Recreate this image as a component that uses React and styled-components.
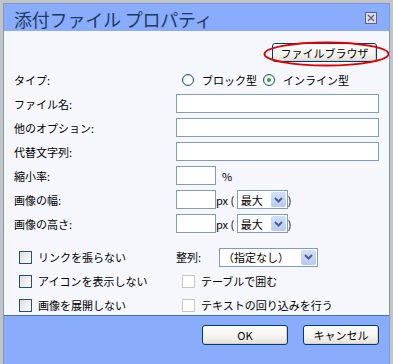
import React from "react";
import styled, { createGlobalStyle } from "styled-components";

const GlobalStyle = createGlobalStyle`
  html, body {
    margin: 0;
    padding: 0;
    background: #c4c4c4;
  }
  body {
    font-family: "Noto Sans CJK JP", "Liberation Sans", sans-serif;
    font-size: 11px;
    color: #000;
  }
`;

const Dialog = styled.div`
  margin: 3px 0 0 3px;
  width: 387px;
  height: 361px;
  box-sizing: border-box;
  border: 1px solid #7b98dc;
  border-bottom: none;
  background: #f5f7fd;
  display: flex;
  flex-direction: column;
  overflow: hidden;
`;

const Header = styled.div`
  height: 27px;
  flex: none;
  background: #8aacfc;
  display: flex;
  align-items: center;
  justify-content: space-between;
  padding: 0 12px 0 10px;
`;

const Title = styled.div`
  font-size: 18px;
  color: #1e3a5f;
  line-height: 1;
  letter-spacing: -0.2px;
  margin-top: 2px;
`;

const CloseBox = styled.div`
  width: 12px;
  height: 12px;
  display: flex;
`;

const Body = styled.div`
  flex: 1;
  padding: 12px 12px 0 10px;
  display: flex;
  flex-direction: column;
`;

const TopRow = styled.div`
  display: flex;
  justify-content: flex-end;
`;

const Anchor = styled.div`
  position: relative;
`;

const Ring = styled.svg`
  position: absolute;
  left: -9px;
  top: -2px;
  pointer-events: none;
`;

const XpButton = styled.button`
  box-sizing: border-box;
  width: ${(p) => p.$w}px;
  height: ${(p) => p.$h}px;
  padding: 0;
  font: inherit;
  color: #000;
  border: 1px solid #003c74;
  border-radius: 3px;
  background: linear-gradient(#ffffff, #f4f3ee 60%, #e3e0d6);
  box-shadow: inset -1px -1px 0 #d6d0c5;
  display: flex;
  align-items: center;
  justify-content: center;
`;

const Form = styled.div`
  margin-top: 8px;
  display: grid;
  grid-template-columns: 162px 1fr;
  grid-auto-rows: 19px;
  row-gap: 5px;
  align-items: center;
`;

const Label = styled.div`
  white-space: nowrap;
`;

const Field = styled.div`
  display: flex;
  align-items: center;
  height: 19px;
`;

const TextBox = styled.div`
  box-sizing: border-box;
  width: ${(p) => p.$w}px;
  height: 19px;
  border: 1px solid #7f9db9;
  background: #fff;
  flex: none;
`;

const Unit = styled.span`
  margin-left: ${(p) => p.$ml || 0}px;
  white-space: pre;
`;

const Radio = styled.span`
  box-sizing: border-box;
  width: 12px;
  height: 12px;
  border-radius: 50%;
  border: 1px solid #1c5180;
  background: radial-gradient(circle at 60% 60%, #ffffff 20%, #dcdcd7 90%);
  display: inline-flex;
  align-items: center;
  justify-content: center;
  margin: 0 8px 0 6px;
  flex: none;

  &::after {
    content: "";
    width: 4px;
    height: 4px;
    border-radius: 50%;
    background: ${(p) => (p.$on ? "#2da52d" : "transparent")};
  }
`;

const Options = styled.div`
  margin-top: 14px;
  padding-left: 5px;
  display: grid;
  grid-template-columns: 157px 1fr;
  grid-auto-rows: 20px;
  row-gap: 4px;
  align-items: center;
`;

const CheckRow = styled.div`
  display: flex;
  align-items: center;
  white-space: nowrap;
  padding-left: ${(p) => p.$pl || 0}px;
`;

const Check = styled.span`
  box-sizing: border-box;
  width: 13px;
  height: 13px;
  flex: none;
  margin-right: 6px;
  border: 1px solid ${(p) => (p.$off ? "#cac8bb" : "#1c5180")};
  background: ${(p) =>
    p.$off ? "#fff" : "linear-gradient(135deg, #dcdcd7, #ffffff)"};
`;

const AlignLabel = styled.span`
  width: 43px;
  flex: none;
`;

const Select = styled.div`
  box-sizing: border-box;
  width: ${(p) => p.$w}px;
  height: 19px;
  border: 1px solid #7f9db9;
  background: #fff;
  display: flex;
  align-items: center;
  justify-content: space-between;
  padding: 0 1px 0 3px;
  flex: none;
`;

const Arrow = styled.span`
  width: 15px;
  height: 15px;
  border-radius: 2px;
  background: linear-gradient(#d3defb, #b6c9f7);
  display: flex;
  align-items: center;
  justify-content: center;
`;

const Footer = styled.div`
  height: 39px;
  flex: none;
  border-top: 1px solid #4d71b6;
  background: #8aacfc;
  display: flex;
  justify-content: flex-end;
  gap: 15px;
  padding: 9px 10px 0 0;
  box-sizing: content-box;
`;

const Chevron = () => (
  <svg width="9" height="6" viewBox="0 0 9 6">
    <path d="M1 1 L4.5 4.5 L8 1" fill="none" stroke="#4d6185" strokeWidth="2" />
  </svg>
);

const Dropdown = ({ w, children }) => (
  <Select $w={w}>
    <span>{children}</span>
    <Arrow>
      <Chevron />
    </Arrow>
  </Select>
);

export default function App() {
  return (
    <>
      <GlobalStyle />
      <Dialog>
        <Header>
          <Title>添付ファイル プロパティ</Title>
          <CloseBox>
            <svg width="12" height="12" viewBox="0 0 12 12">
              <rect x="0.5" y="0.5" width="11" height="11" fill="#dcdcef" stroke="#5f5f7a" />
              <path d="M3 3 L9 9 M9 3 L3 9" stroke="#5f5f7a" strokeWidth="1.4" />
            </svg>
          </CloseBox>
        </Header>
        <Body>
          <TopRow>
            <Anchor>
              <XpButton $w={105} $h={19}>ファイルブラウザ</XpButton>
              <Ring width="127" height="26" viewBox="0 0 127 26">
                <ellipse cx="63.5" cy="13" rx="62" ry="11.5" fill="none" stroke="#e00000" strokeWidth="2" />
              </Ring>
            </Anchor>
          </TopRow>
          <Form>
            <Label>タイプ:</Label>
            <Field>
              <Radio />
              <span>ブロック型</span>
              <Radio $on />
              <span>インライン型</span>
            </Field>
            <Label>ファイル名:</Label>
            <Field><TextBox $w={203} /></Field>
            <Label>他のオプション:</Label>
            <Field><TextBox $w={203} /></Field>
            <Label>代替文字列:</Label>
            <Field><TextBox $w={203} /></Field>
            <Label>縮小率:</Label>
            <Field>
              <TextBox $w={40} />
              <Unit $ml={6}>%</Unit>
            </Field>
            <Label>画像の幅:</Label>
            <Field>
              <TextBox $w={40} />
              <Unit>px ( </Unit>
              <Dropdown w={51}>最大</Dropdown>
              <Unit>)</Unit>
            </Field>
            <Label>画像の高さ:</Label>
            <Field>
              <TextBox $w={40} />
              <Unit>px ( </Unit>
              <Dropdown w={51}>最大</Dropdown>
              <Unit>)</Unit>
            </Field>
          </Form>
          <Options>
            <CheckRow>
              <Check />
              <span>リンクを張らない</span>
            </CheckRow>
            <CheckRow>
              <AlignLabel>整列:</AlignLabel>
              <Dropdown w={99}>（指定なし）</Dropdown>
            </CheckRow>
            <CheckRow>
              <Check />
              <span>アイコンを表示しない</span>
            </CheckRow>
            <CheckRow $pl={6}>
              <Check $off />
              <span>テーブルで囲む</span>
            </CheckRow>
            <CheckRow>
              <Check />
              <span>画像を展開しない</span>
            </CheckRow>
            <CheckRow $pl={6}>
              <Check $off />
              <span>テキストの回り込みを行う</span>
            </CheckRow>
          </Options>
        </Body>
        <Footer>
          <XpButton $w={86} $h={20}>OK</XpButton>
          <XpButton $w={76} $h={20}>キャンセル</XpButton>
        </Footer>
      </Dialog>
    </>
  );
}
